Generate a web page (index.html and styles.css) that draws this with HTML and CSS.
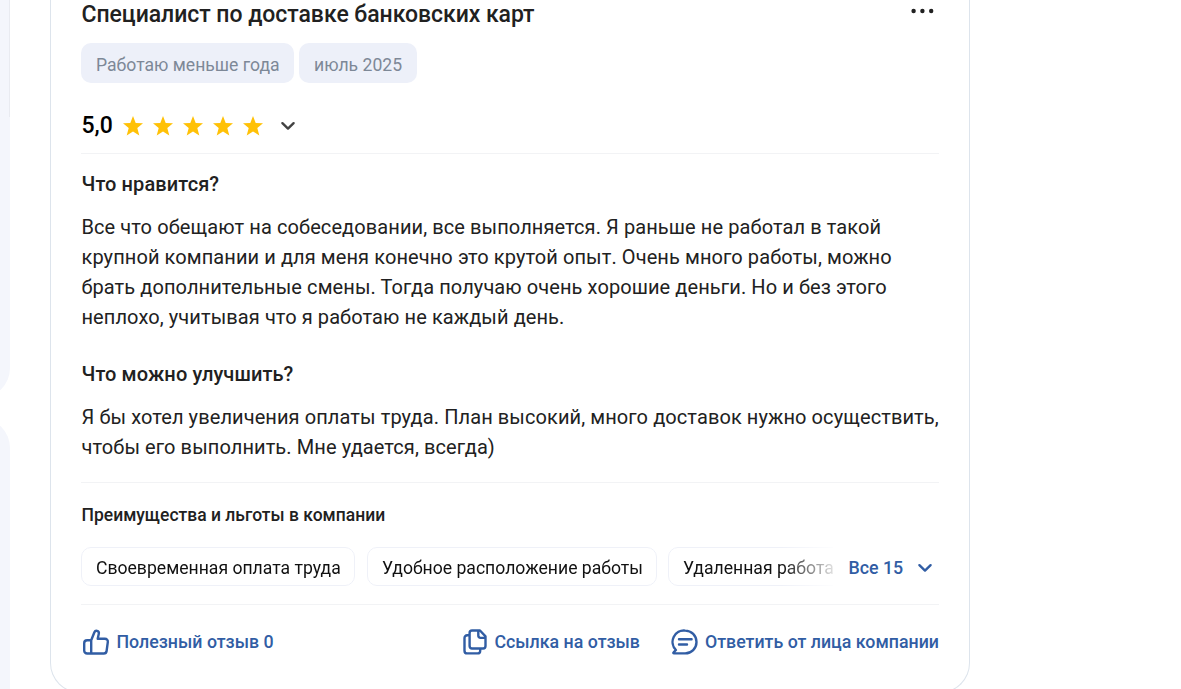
FILE: index.html
```
<!DOCTYPE html>
<html lang="ru">
<head>
  <meta charset="UTF-8" />
  <meta name="viewport" content="width=device-width, initial-scale=1.0"/>
  <title>Отзыв о компании</title>
  <link rel="stylesheet" href="styles.css">
</head>
<body>

  <aside class="sidebar">
    <div class="panel panel-top"><div class="panel-scroll"></div></div>
    <div class="panel panel-bottom"></div>
  </aside>

  <main class="review">
    <header class="review-header">
      <h2 class="title">Специалист по доставке банковских карт</h2>
      <button class="more" aria-label="Ещё">
        <svg width="24" height="6" viewBox="0 0 24 6" fill="#212121"><circle cx="2.6" cy="3" r="2.2"/><circle cx="11.4" cy="3" r="2.2"/><circle cx="20.2" cy="3" r="2.2"/></svg>
      </button>
    </header>

    <div class="tags">
      <span class="tag tag-term">Работаю меньше года</span>
      <span class="tag tag-date">июль 2025</span>
    </div>

    <div class="rating">
      <span class="score">5,0</span>
      <div class="stars">
        <svg class="star" viewBox="0 0 20 20"><path d="M10 0l2.7 7 7.3.3-5.7 4.6 2 7.6-6.3-4.1-6.3 4.1 2-7.6L0 7.3 7.3 7z"/></svg>
        <svg class="star" viewBox="0 0 20 20"><path d="M10 0l2.7 7 7.3.3-5.7 4.6 2 7.6-6.3-4.1-6.3 4.1 2-7.6L0 7.3 7.3 7z"/></svg>
        <svg class="star" viewBox="0 0 20 20"><path d="M10 0l2.7 7 7.3.3-5.7 4.6 2 7.6-6.3-4.1-6.3 4.1 2-7.6L0 7.3 7.3 7z"/></svg>
        <svg class="star" viewBox="0 0 20 20"><path d="M10 0l2.7 7 7.3.3-5.7 4.6 2 7.6-6.3-4.1-6.3 4.1 2-7.6L0 7.3 7.3 7z"/></svg>
        <svg class="star" viewBox="0 0 20 20"><path d="M10 0l2.7 7 7.3.3-5.7 4.6 2 7.6-6.3-4.1-6.3 4.1 2-7.6L0 7.3 7.3 7z"/></svg>
      </div>
      <svg class="chevron" viewBox="0 0 16 10"><path d="M2.4 2.2L8 7.6l5.6-5.4"/></svg>
    </div>

    <section class="answers">
      <h3 class="question">Что нравится?</h3>
      <p class="text">Все что обещают на собеседовании, все выполняется. Я раньше не работал в такой<br>крупной компании и для меня конечно это крутой опыт. Очень много работы, можно<br>брать дополнительные смены. Тогда получаю очень хорошие деньги. Но и без этого<br>неплохо, учитывая что я работаю не каждый день.</p>
      <h3 class="question">Что можно улучшить?</h3>
      <p class="text">Я бы хотел увеличения оплаты труда. План высокий, много доставок нужно осуществить,<br>чтобы его выполнить. Мне удается, всегда)</p>
    </section>

    <section class="benefits">
      <h4 class="benefits-title">Преимущества и льготы в компании</h4>
      <div class="benefits-row">
        <div class="benefits-list">
          <span class="benefit benefit-pay">Своевременная оплата труда</span>
          <span class="benefit benefit-place">Удобное расположение работы</span>
          <span class="benefit">Удаленная работа</span>
        </div>
        <button class="show-all">Все 15
          <svg class="chevron" viewBox="0 0 16 10"><path d="M2.4 2.2L8 7.6l5.6-5.4"/></svg>
        </button>
      </div>
    </section>

    <footer class="actions">
      <button class="action">
        <svg class="icon" viewBox="0 0 28 28"><path d="M9.2 12.2l3.2-7.9c.5-1.2 1.5-1.8 2.6-1.5 1.5.4 2.1 1.6 1.8 2.9l-1.1 5.1h7.1c2.1 0 3.3 1.3 3 3.3l-1.2 8.9c-.2 1.5-1.3 2.5-2.8 2.5H5.2c-1.8 0-3-1.2-3-3v-7.3c0-1.8 1.2-3 3-3zM9.2 12.2v13.3"/></svg>
        <span class="action-label">Полезный отзыв 0</span>
      </button>
      <button class="action action-link">
        <svg class="icon" viewBox="0 0 28 28"><path d="M11 2.5h8l5.5 5.8v9.8c0 1.4-1 2.4-2.4 2.4H11c-1.4 0-2.4-1-2.4-2.4V4.9c0-1.4 1-2.4 2.4-2.4zM17.3 3v4.6c0 1.4.8 2.3 2.2 2.3h4.6M8.3 7.3H6.2c-1.6 0-2.7 1.1-2.7 2.7v12.7c0 1.6 1.1 2.7 2.7 2.7h10.3c1.6 0 2.7-1.1 2.7-2.7v-1.9"/></svg>
        <span class="action-label">Ссылка на отзыв</span>
      </button>
      <button class="action action-reply">
        <svg class="icon" viewBox="0 0 28 28"><path d="M14.2 2.6a11.3 11.4 0 1 1 0 22.800H3c-.7 0-.9-.6-.4-1l2.300-2.400A11.300 11.400 0 0 1 14.200 2.600zM8 11.300h12.600M8 16.500h8"/></svg>
        <span class="action-label">Ответить от лица компании</span>
      </button>
    </footer>
  </main>

</body>
</html>
```
FILE: styles.css
```
* {
  box-sizing: border-box;
}

body {
  margin: 0;
  height: 689px;
  overflow: hidden;
  display: flex;
  gap: 40px;
  background: #fff;
  color: #212121;
  font-family: Roboto, sans-serif;
}

h2, h3, h4, p {
  margin: 0;
  font-weight: 500;
}

button {
  padding: 0;
  border: none;
  background: none;
  font: inherit;
  color: inherit;
  cursor: pointer;
}

/* left column, only its right edge is visible */
.sidebar {
  width: 10px;
  flex: none;
  display: flex;
  flex-direction: column;
  align-items: flex-end;
  gap: 20px;
  overflow: hidden;
}

.panel {
  width: 300px;
  flex: none;
  background: #f4f6fc;
}

.panel-top {
  height: 398px;
  border-radius: 0 0 30px 0;
}

.panel-scroll {
  height: 117px;
  border-right: 1px solid #e9ebf1;
}

.panel-bottom {
  height: 300px;
  border-radius: 0 30px 0 0;
}

.review {
  width: 920px;
  height: 693px;
  flex: none;
  padding: 0 30px;
  border: 1px solid #dde4ec;
  border-top: none;
  border-radius: 0 0 30px 30px;
}

.review-header {
  height: 43px;
  display: flex;
  justify-content: space-between;
  align-items: flex-start;
}

.title {
  padding-left: 0.5px;
  font-size: 23px;
  letter-spacing: -0.04px;
  line-height: 29px;
}

.more {
  height: 22px;
  display: flex;
  align-items: center;
  margin-right: 4px;
}

.tags {
  display: flex;
  gap: 5px;
}

.tag {
  height: 40px;
  padding: 2px 15px 0;
  border-radius: 10px;
  background: #edf0f9;
  color: #7d8897;
  font-size: 17.6px;
  line-height: 40px;
  white-space: nowrap;
}

.tag-term {
  width: 213px;
}

.tag-date {
  width: 118px;
}

.rating {
  height: 71px;
  display: flex;
  align-items: center;
  padding-top: 15px;
  border-bottom: 1px solid #f2f3f5;
}

.score {
  width: 42px;
  padding-left: 0.5px;
  color: #000;
  font-size: 23px;
  font-weight: 500;
}

.stars {
  display: flex;
  gap: 10px;
}

.star {
  width: 20px;
  height: 20px;
  fill: #ffc107;
}

.chevron {
  width: 16px;
  height: 10px;
  fill: none;
  stroke: currentColor;
  stroke-width: 2.4;
  stroke-linecap: round;
  stroke-linejoin: round;
}

.rating .chevron {
  margin-left: 17px;
  color: #424242;
}

.answers {
  height: 329px;
  padding-top: 15px;
  border-bottom: 1px solid #f2f3f5;
}

.question {
  padding-left: 0.5px;
  font-size: 20px;
  letter-spacing: 0.1px;
  line-height: 30px;
}

.text {
  margin: 13px 0 27px 0.5px;
  font-size: 20px;
  font-weight: 400;
  letter-spacing: 0.09px;
  line-height: 30px;
  white-space: nowrap;
}

.benefits {
  height: 122px;
  padding-top: 18px;
  border-bottom: 1px solid #f2f3f5;
}

.benefits-title {
  padding-left: 0.5px;
  font-size: 17.5px;
  line-height: 28px;
}

.benefits-row {
  display: flex;
  align-items: center;
  margin-top: 18px;
}

.benefits-list {
  width: 752px;
  flex: none;
  display: flex;
  gap: 12px;
  overflow: hidden;
  -webkit-mask-image: linear-gradient(to right, #000 700px, transparent 760px);
  mask-image: linear-gradient(to right, #000 700px, transparent 760px);
}

.benefit {
  height: 39px;
  flex: none;
  padding: 2px 14px 0;
  border: 1px solid #eff1f8;
  border-radius: 10px;
  color: #111;
  font-size: 17.6px;
  line-height: 37px;
  white-space: nowrap;
}

.benefit-pay {
  width: 274px;
}

.benefit-place {
  width: 290px;
  margin-right: -1px;
}

.show-all {
  display: flex;
  align-items: center;
  gap: 13.5px;
  margin-left: 15.5px;
  padding-top: 2px;
  color: #315da4;
  font-size: 17.8px;
  font-weight: 500;
}

.actions {
  height: 74px;
  display: flex;
  align-items: center;
  padding-left: 1px;
}

.action {
  display: flex;
  align-items: center;
  gap: 6.5px;
  color: #315da4;
  font-size: 17.8px;
  font-weight: 500;
  white-space: nowrap;
}

.action-label {
  padding-bottom: 1px;
}

.action-link {
  gap: 5px;
  margin-left: auto;
  margin-right: 31px;
}

.action-reply {
  gap: 6px;
}

.icon {
  width: 28px;
  height: 28px;
  fill: none;
  stroke: currentColor;
  stroke-width: 2.4;
  stroke-linecap: round;
  stroke-linejoin: round;
}
```
